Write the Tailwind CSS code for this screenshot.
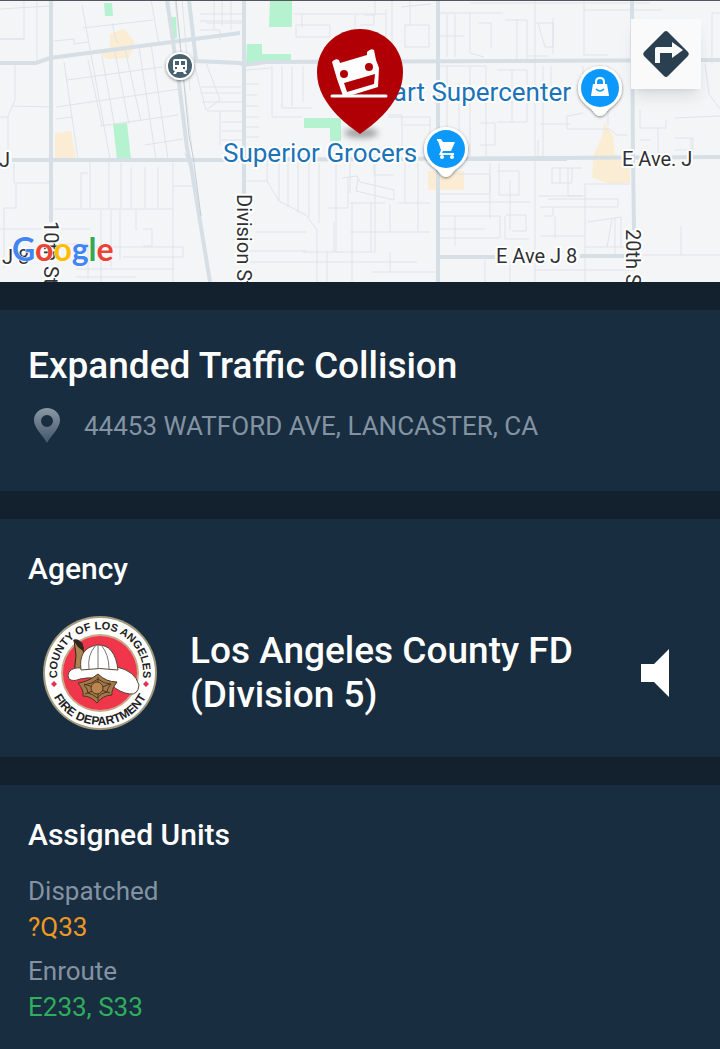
<!DOCTYPE html>
<html lang="en">
<head>
  <meta charset="UTF-8">
  <meta name="viewport" content="width=device-width, initial-scale=1.0">
  <title>Expanded Traffic Collision</title>
  <script src="https://cdn.jsdelivr.net/npm/@tailwindcss/browser@4"></script>
</head>
<body class="min-h-screen bg-[#182d40] font-[Roboto,sans-serif] text-white">
  <!-- Map -->
  <section class="relative h-[282px] overflow-hidden bg-[#f4f5f6]">
    <svg class="h-full w-full" viewBox="0 0 720 282" preserveAspectRatio="xMidYMid slice" role="img" aria-label="Map">
      <defs>
        <filter id="soft" x="-50%" y="-100%" width="200%" height="300%"><feGaussianBlur stdDeviation="3"/></filter>
        <filter id="drop" x="-30%" y="-30%" width="160%" height="160%"><feDropShadow dx="0" dy="1" stdDeviation="1.5" flood-opacity=".5"/></filter>
      </defs>
      <!-- Parks -->
      <g fill="#b5f2d0">
        <path d="M104 3h8l1 13h-8zM170 17h6l1 21-6 2zM113 124l14-1 4 36h-14zM270 0h22v27h-23zM247 44h15v10h29v7l-45 2zM304 118h37v23h-11v-13h-26z"/>
      </g>
      <!-- Commercial areas -->
      <g fill="#fdebcc" opacity=".8">
        <path d="M110 34l14-5 6 7 5 8-6 14-22 1-10-7 13-5zM55 133l16-2 5 28H55zM428 171h36v19h-36zM604 122l9 14 2 18 15 14v15h-24l-14-6 2-23 8-17z"/>
      </g>
      <!-- Minor streets -->
      <g fill="none" stroke="#e0e3e8" stroke-width="1">
        <path d="M0 9l50-3M24 0v39H0M37 0v62M15 64v36l-7 16v44M0 117h8M12 106l39 1M0 39h24M54 41l20-2v5l14-2M56 107l124-18M67 80l95-13M56 119l17-2M82 5l28 154M64 62l14 97M88 60l14 65M102 56l12 67M115 52l14 72M125 49l16 72M139 47l17 112M151 44l17 115M83 28l70-8M151 0l8 44M112 23l5 20M100 126l78-11M145 145l38-6"/>
        <path d="M14 163v20h36M16 184v24H4v60M90 162v46M81 173v35M81 173h7M109 162v46M121 163v45M131 167v41M145 167v41M158 167v41M54 209h118M173 163v119M101 210v72M111 210v57M120 210v50M136 210v20M0 229h90M54 244h34v35M88 247h95v10h-60M143 229h9v17h-9M76 269h98M173 186h20M76 277h60"/>
        <path d="M175 0l17 150M182 0l8 90M194 64l12 46 14-10-15-40M200 14h44M200 21h44M200 30h20v10M206 23h36M201 87h40M201 93h40M202 102h40M207 111h37M220 111v34M222 122h22M222 131h22M222 140h20M214 0v30M222 0v26M231 0v30"/>
        <path d="M293 14h93M296 25h34v12h-34zM302 14v14M355 15v46M364 15h10v10h-14M375 0v15M392 0v60M401 7l30-3M405 25h24v22h-24zM386 10v50M410 0v26M272 66v50M282 66v42h30M292 66v40M303 66v36M245 70l26-2M245 84h14M245 95h12M245 106h14M245 117h14M245 127h14M245 137h14M272 117h30M388 115h14v36M388 117h42v40M403 125h27"/>
        <path d="M267 163v18l12 20 27 14 11 15v52M279 163v37M288 163v44M298 163v50M309 163v54M319 163v60M247 181h20M336 162v90M342 178l15-2 3 6 34 8v10M358 179l-2 12 38 9M350 163v30M374 163v12h20M350 203h35M352 203v79M371 202v50M390 204v28M303 252h70M256 232h50M247 251h60M328 208h20v-30M334 222v30M375 163v90M350 232h80M398 203h32M405 163v40M418 163v68M372 272h65M247 262h170M327 252v30M390 252v20"/>
        <path d="M440 13h63M470 13v40l14 4M478 23h13v25M505 20h22v42h-22M517 19v43M535 0v282M536 23h17v24h-8l-7-24M553 18v36M584 0v55h24M584 10h78M470 3h180M447 14v43M455 14v43M440 36h24M528 56h20M440 66h46v92M497 70h30v52h-30M512 70v52M480 123h15v22h-15M567 115v14h42l8 6h10M568 116l15-3M540 124h30M538 140v18M447 66v90M459 83v73M470 66v92M543 66v90M451 100h25M551 66v24M583 66v30M608 66v60"/>
        <path d="M440 174h50v20h-50M499 163v32h20v-24h-22M490 163v56M510 180v50M440 202h90M440 216h60v22h-60M455 216v30M440 229h45M505 216v23h24M506 215h20v16h-14M552 168h30M552 168v15h20v-15M560 168v15M568 168v28h14M538 196h47M548 199h70v8h-78M553 207v9h-10M585 184v98M585 184h45M588 222l33-5v30M612 219l-5 28M615 218v40M585 247h46M555 216v22M540 236h45M485 260v22M510 262v20M535 270h100M641 255h79M681 226v29"/>
        <path d="M712 13h8M712 13v50M705 64l4 30 11 15M640 110v18h26v-8M675 118l45-2M658 128v26M675 138h18v12h-18M691 138v16M640 140h10"/>
      </g>
      <!-- Main roads -->
      <g fill="none" stroke="#d6dfe6" stroke-width="4">
        <path d="M51 0v222M438 0v282M632 0l1 160 1 70M12 160h210l498-3M467 159h100"/>
        <path d="M0 63h36l14-5 190-25"/>
        <path d="M244 0v195M167 0l12 83 8 65 4 18 19 116M189 0l7 61 44 2 4 2 22-3 454-2M440 257h55M580 256h50"/>
        <path d="M176 0l13 136 4 20 8 60" stroke-width="1" stroke="#c9cdd4"/>
      </g>
      <path d="M184 152l8 8-2 8z" fill="#d6dfe6"/>
      <!-- Transit stop -->
      <g filter="url(#drop)">
        <circle cx="180" cy="66" r="14" fill="#fff"/>
        <circle cx="180" cy="66" r="12" fill="#49616d"/>
        <path d="M175 59h10q2 0 2 2v8q0 2-2 2l2 3h-3l-1-2h-6l-1 2h-3l2-3q-2 0-2-2v-8q0-2 2-2z" fill="#fff"/>
        <path d="M175 61h4v4h-4zM181 61h4v4h-4zM175 67h2v2h-2zM183 67h2v2h-2z" fill="#49616d"/>
      </g>
      <!-- Street labels -->
      <g font-size="20" fill="#303134" stroke="#fff" stroke-width="4" paint-order="stroke" stroke-linejoin="round">
        <text x="-1" y="167">J</text>
        <text x="2" y="264">J 8</text>
        <text x="622" y="166">E Ave. J</text>
        <text x="496" y="263">E Ave J 8</text>
        <text transform="translate(44 221) rotate(90)">10th St</text>
        <text transform="translate(237 194) rotate(90)">Division St</text>
        <text transform="translate(626 229) rotate(90)">20th St</text>
      </g>
      <!-- Places -->
      <g font-size="26" fill="#1b73b8" stroke="#fff" stroke-width="4" paint-order="stroke" stroke-linejoin="round">
        <text x="571" y="101" text-anchor="end">Walmart Supercenter</text>
        <text x="223" y="162">Superior Grocers</text>
      </g>
      <g filter="url(#drop)" fill="#fff">
        <path d="M600 66a22 22 0 0 1 22 22c0 11-7 16-13 21-4 4-5 7-9 7s-5-3-9-7c-6-5-13-10-13-21a22 22 0 0 1 22-22z"/>
        <path d="M446 127a22 22 0 0 1 22 22c0 11-7 16-13 21-4 4-5 7-9 7s-5-3-9-7c-6-5-13-10-13-21a22 22 0 0 1 22-22z"/>
      </g>
      <circle cx="600" cy="88" r="19" fill="#0d99fb"/>
      <circle cx="446" cy="149" r="19" fill="#0d99fb"/>
      <path d="M593 84h14l2 12h-18z" fill="#fff"/>
      <path d="M596 85v-3q0-4 4-4t4 4v3" fill="none" stroke="#fff" stroke-width="2"/>
      <path d="M596 89q4 4 8 0" fill="none" stroke="#0d99fb" stroke-width="1.5"/>
      <path d="M437 139h4l2 3h12l-4 9h-8l-1 2h12v2h-15l2-5-3-9h-1z" fill="#fff"/>
      <circle cx="442" cy="157" r="2" fill="#fff"/><circle cx="452" cy="157" r="2" fill="#fff"/>
      <!-- Incident pin -->
      <ellipse cx="361" cy="133" rx="17" ry="5" fill="#000" opacity=".35" filter="url(#soft)"/>
      <path d="M360 29c24 0 43 19 43 43 0 18-9 31-20 43-8 8-16 14-23 19-7-5-15-11-23-19-11-12-20-25-20-43 0-24 19-43 43-43z" fill="#b00006"/>
      <path d="M332 62q3-4 7-2l1 3 27-8v-3q4-4 7-2l2 10 3 8-1 19-26 8-3 2-6-1-6-17z" fill="#fff"/>
      <circle cx="344" cy="74" r="4" fill="#b00006"/><circle cx="369" cy="67" r="4" fill="#b00006"/>
      <path d="M344 83l31-9-1 10-27 8z" fill="#b00006"/>
      <path d="M332 96h54" stroke="#fff" stroke-width="3" stroke-linecap="round"/>
      <!-- Google logo -->
      <text x="12" y="261" font-size="32" font-family="Lato" font-weight="700" stroke="#fff" stroke-width="1" paint-order="stroke"><tspan fill="#4285f4">G</tspan><tspan fill="#ea4335">o</tspan><tspan fill="#fbbc05">o</tspan><tspan fill="#4285f4">g</tspan><tspan fill="#34a853">l</tspan><tspan fill="#ea4335">e</tspan></text>
      <path d="M0 0h720" stroke="#55565e" stroke-width="2"/>
    </svg>
    <button type="button" aria-label="Directions" class="absolute top-[19px] right-[19px] flex size-[70px] items-center justify-center bg-[#fafafa] shadow-lg">
      <svg class="size-12" viewBox="0 0 48 48">
        <path d="M22 2a3 3 0 0 1 4 0l20 20a3 3 0 0 1 0 4L26 46a3 3 0 0 1-4 0L2 26a3 3 0 0 1 0-4z" fill="#2a3f50"/>
        <path d="M13 33V19q0-2 2-2h15v-5l11 8-11 8v-5H18v10z" fill="#fafafa"/>
      </svg>
    </button>
  </section>

  <main class="flex flex-col gap-7 bg-[#12212d] pt-7">
    <!-- Incident -->
    <section class="bg-[#182d40] px-7 pt-8 pb-[45px]">
      <h1 class="text-[37px] leading-12 font-medium">Expanded Traffic Collision</h1>
      <p class="mt-4 flex items-center gap-6 text-[26px] leading-10 text-[#8493a2]">
        <svg class="ml-1 h-9 w-7" viewBox="0 0 28 36">
          <defs>
            <linearGradient id="pin" x1="0" y1="0" x2="0" y2="1"><stop offset="0" stop-color="#8b98a4"/><stop offset="1" stop-color="#41576b"/></linearGradient>
          </defs>
          <path fill="url(#pin)" fill-rule="evenodd" d="M15 0c7 0 13 5 13 12 0 8-8 14-13 23C10 26 2 20 2 12 2 5 8 0 15 0zm0 7a6 6 0 1 0 0 12 6 6 0 0 0 0-12z"/>
        </svg>
        44453 WATFORD AVE, LANCASTER, CA
      </p>
    </section>

    <!-- Agency -->
    <section class="bg-[#182d40] px-7 pt-8 pb-[26px]">
      <h2 class="text-[30px] leading-9 font-medium">Agency</h2>
      <div class="mt-7 flex items-center">
        <svg class="ml-[14px] size-[116px] shrink-0" viewBox="0 0 116 116" role="img" aria-label="County of Los Angeles Fire Department">
          <defs>
            <path id="arc-top" d="M18 73a43 43 0 1 1 80 0"/>
            <path id="arc-bottom" d="M6 58a52 52 0 0 0 104 0"/>
          </defs>
          <circle cx="58" cy="58" r="57" fill="#a39b7c"/>
          <circle cx="58" cy="58" r="55" fill="#fff"/>
          <circle cx="58" cy="58" r="39" fill="#c9a98a"/>
          <circle cx="58" cy="58" r="37" fill="#f0364b"/>
          <g font-family="Liberation Sans" font-weight="700" fill="#222" text-anchor="middle">
            <text font-size="11"><textPath href="#arc-top" startOffset="50%">COUNTY OF LOS ANGELES</textPath></text>
            <text font-size="12"><textPath href="#arc-bottom" startOffset="50%">FIRE DEPARTMENT</textPath></text>
          </g>
          <path d="M12 66l3 3-3 3-3-3zM104 66l3 3-3 3-3-3z" fill="#e0304a"/>
          <path d="M32 25l8 3 4 25-6 8-6-1 2-20z" fill="#a8854f" stroke="#30251d"/>
          <path d="M31 25q7-3 11 8l-1 3-5-4z" fill="#30251d"/>
          <path d="M27 57q4-5 12-4 20-3 36-1 18 4 22 18-1 10-9 9-10-1-20-10-13-9-30-5-7 3-11 0-2-3 0-7z" fill="#fff" stroke="#574537"/>
          <path d="M39 55q-3-22 16-25 18-1 21 25-18-3-37 0z" fill="#fff" stroke="#574537"/>
          <path d="M54 30q-9 10-7 24M56 30v24M59 30q8 9 8 24" fill="none" stroke="#777"/>
          <path d="M36 68q10-1 20-9 8 8 19 8-6 8-5 13-9 0-15 8-6-7-14-7 1-6-5-13z" fill="#a47b48" stroke="#4d3422"/>
          <path d="M42 69l26 9M68 69l-25 10M56 62v24M42 70q8-1 14-6 6 5 13 5-4 5-4 8-6 1-10 6-4-4-9-5 0-4-4-8z" fill="none" stroke="#4d3422"/>
          <circle cx="55" cy="73" r="6" fill="#b98550" stroke="#4d3422"/>
        </svg>
        <p class="ml-8 flex-1 text-[37px] leading-11 font-medium">Los Angeles County FD<br>(Division 5)</p>
        <button type="button" aria-label="Play audio" class="mr-5 shrink-0">
          <svg class="h-12 w-8" viewBox="0 0 32 48"><path d="M1 15h13L29 0v48L14 33H1z" fill="#fff"/></svg>
        </button>
      </div>
    </section>

    <!-- Units -->
    <section class="bg-[#182d40] px-7 pt-8 pb-6">
      <h2 class="text-[30px] leading-9 font-medium">Assigned Units</h2>
      <dl class="mt-5 text-[26px] leading-9">
        <dt class="text-[#8493a2]">Dispatched</dt>
        <dd class="mb-2 text-[#f0981f]">?Q33</dd>
        <dt class="text-[#8493a2]">Enroute</dt>
        <dd class="text-[#2fae5d]">E233, S33</dd>
      </dl>
    </section>
  </main>
</body>
</html>
